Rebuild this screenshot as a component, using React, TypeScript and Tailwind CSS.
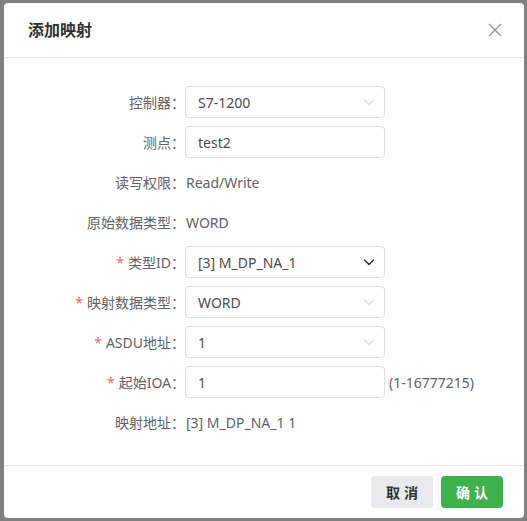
import * as React from 'react';

const font = { fontFamily: '"Noto Sans", "Noto Sans CJK SC", sans-serif' };

const Chevron: React.FC<{ dark?: boolean }> = ({ dark }) => (
  <svg width="14" height="14" viewBox="0 0 14 14" fill="none">
    <path
      d="M2.5 5L7 9.5L11.5 5"
      stroke={dark ? '#303133' : '#c0c4cc'}
      strokeWidth={dark ? 1.5 : 1}
      strokeLinecap="round"
      strokeLinejoin="round"
    />
  </svg>
);

interface IRowProps {
  label: string;
  required?: boolean;
  children: React.ReactNode;
}

const Row: React.FC<IRowProps> = ({ label, required, children }) => (
  <div className="flex items-center h-[32px]">
    <div className="w-[181px] shrink-0 text-right text-[14px] text-[#606266]">
      {required && <span className="text-[#f56c6c] mr-[4px]">*</span>}
      {label}：
    </div>
    <div className="flex items-center">{children}</div>
  </div>
);

const Select: React.FC<{ value: string; dark?: boolean }> = ({ value, dark }) => (
  <div className="w-[200px] h-[32px] flex items-center justify-between border border-[#dcdfe6] rounded-[4px] pl-[12px] pr-[8px] text-[14px] text-[#4a4c52]">
    <span>{value}</span>
    <Chevron dark={dark} />
  </div>
);

const Input: React.FC<{ value: string }> = ({ value }) => (
  <div className="w-[200px] h-[32px] flex items-center border border-[#dcdfe6] rounded-[4px] pl-[12px] text-[14px] text-[#4a4c52]">
    {value}
  </div>
);

const Text: React.FC<{ value: string }> = ({ value }) => (
  <span className="ml-[1px] text-[14px] text-[#606266]">{value}</span>
);

export default function App() {
  return (
    <div className="w-[527px] h-[521px] bg-[#808080] pt-[3px] pl-[4px]" style={font}>
      <div className="w-[520px] h-[515px] bg-white rounded-[4px] flex flex-col">
        <div className="h-[55px] flex items-center justify-between pl-[24px] pr-[22px] border-b border-[#e4e7ed]">
          <span className="text-[16px] font-semibold text-[#303133]">添加映射</span>
          <svg width="14" height="14" viewBox="0 0 14 14" fill="none">
            <path d="M1 1L13 13M13 1L1 13" stroke="#909399" strokeWidth="1.3" />
          </svg>
        </div>
        <div className="flex-1 flex flex-col gap-[8px] pt-[28px]">
          <Row label="控制器">
            <Select value="S7-1200" />
          </Row>
          <Row label="测点">
            <Input value="test2" />
          </Row>
          <Row label="读写权限">
            <Text value="Read/Write" />
          </Row>
          <Row label="原始数据类型">
            <Text value="WORD" />
          </Row>
          <Row label="类型ID" required>
            <Select value="[3] M_DP_NA_1" dark />
          </Row>
          <Row label="映射数据类型" required>
            <Select value="WORD" />
          </Row>
          <Row label="ASDU地址" required>
            <Select value="1" />
          </Row>
          <Row label="起始IOA" required>
            <Input value="1" />
            <span className="ml-[4px] text-[14px] text-[#606266]">(1-16777215)</span>
          </Row>
          <Row label="映射地址">
            <Text value="[3] M_DP_NA_1 1" />
          </Row>
        </div>
        <div className="h-[53px] border-t border-[#e4e7ed] flex items-center justify-end gap-[8px] pr-[21px]">
          <button className="w-[62px] h-[32px] pl-[4px] rounded-[4px] bg-[#e9eaee] text-[14px] font-bold text-[#303133] tracking-[4px]">
            取消
          </button>
          <button className="w-[62px] h-[32px] pl-[4px] rounded-[4px] bg-[#3db14b] text-[14px] font-bold text-white tracking-[4px]">
            确认
          </button>
        </div>
      </div>
    </div>
  );
}
